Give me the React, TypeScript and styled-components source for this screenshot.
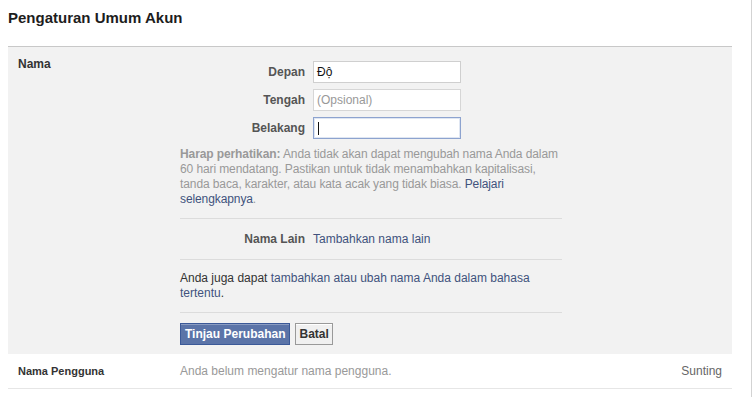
import React from "react";
import styled, { createGlobalStyle } from "styled-components";

const Global = createGlobalStyle`
  html, body { margin: 0; padding: 0; background: #fff; }
  body { font-family: "Liberation Sans", Arial, Helvetica, sans-serif; font-size: 12px; color: #333; }
  * { box-sizing: border-box; }
`;

const Shell = styled.div`
  width: 752px;
  min-height: 100vh;
  border-right: 1px solid #d3d3d3;
  padding-left: 8px;
`;

const Title = styled.h2`
  margin: 0;
  padding-top: 8px;
  height: 46px;
  font-size: 15px;
  line-height: 20px;
  font-weight: bold;
  color: #1d1d1d;
`;

const Panel = styled.section`
  width: 724px;
  background: #f2f2f2;
  border-top: 1px solid #c8c8c8;
  display: grid;
  grid-template-columns: 162px 382px;
  padding: 9px 0 9px 10px;
`;

const SectionLabel = styled.div`
  font-weight: bold;
  color: #333;
  line-height: 16px;
`;

const Content = styled.div`
  padding-top: 5px;
`;

const FieldRows = styled.div`
  display: flex;
  flex-direction: column;
  gap: 6px;
`;

const FieldRow = styled.div`
  display: grid;
  grid-template-columns: 125px 148px;
  column-gap: 8px;
  align-items: center;
`;

const FieldLabel = styled.div`
  text-align: right;
  font-weight: bold;
  color: #555;
`;

const FieldBox = styled.div<{ $focused?: boolean; $muted?: boolean }>`
  height: 22px;
  background: #fff;
  border: 1px solid ${(p) => (p.$focused ? "#8da3cf" : p.$muted ? "#d6d6d6" : "#cfcfcf")};
  box-shadow: ${(p) => (p.$focused ? "inset 0 0 0 1px #dfe6f2" : "none")};
  padding: 0 3px;
  display: flex;
  align-items: center;
  color: ${(p) => (p.$muted ? "#999" : "#111")};
`;

const Caret = styled.span`
  width: 1px;
  height: 13px;
  background: #111;
  margin-left: 1px;
`;

const Note = styled.p`
  margin: 8px 0 0;
  color: #999;
  line-height: 15px;
  letter-spacing: -0.1px;
  padding-bottom: 11px;
  border-bottom: 1px solid #dcdcdc;
  b { color: #999; }
`;

const Link = styled.a`
  color: #41527d;
  text-decoration: none;
`;

const OtherRow = styled.div`
  display: grid;
  grid-template-columns: 125px auto;
  column-gap: 8px;
  padding: 12px 0;
  line-height: 16px;
  border-bottom: 1px solid #dcdcdc;
`;

const Plain = styled.p`
  margin: 0;
  padding: 11px 0;
  line-height: 15px;
  color: #333;
  border-bottom: 1px solid #dcdcdc;
`;

const Actions = styled.div`
  display: flex;
  gap: 5px;
  margin-top: 10px;
`;

const Button = styled.button<{ $primary?: boolean }>`
  height: 22px;
  padding: ${(p) => (p.$primary ? "0 4px" : "0 3px")};
  font-family: inherit;
  font-size: 12px;
  font-weight: bold;
  border: 1px solid ${(p) => (p.$primary ? "#3b5998" : "#999")};
  background: ${(p) => (p.$primary ? "#5b74a8" : "#f0f0f0")};
  color: ${(p) => (p.$primary ? "#fff" : "#333")};
  box-shadow: ${(p) => (p.$primary ? "inset 0 1px 0 #8a9cc2" : "inset 0 1px 0 #fff")};
  cursor: pointer;
`;

const UserRow = styled.div`
  width: 724px;
  height: 35px;
  border-bottom: 1px solid #e6e6e6;
  display: grid;
  grid-template-columns: 162px 1fr auto;
  align-items: center;
  padding: 0 10px;
`;

const UserLabel = styled.div`
  font-size: 11px;
  font-weight: bold;
  color: #333;
`;

const UserValue = styled.div`
  color: #999;
`;

const Edit = styled.a`
  color: #666;
`;

export default function App() {
  return (
    <>
      <Global />
      <Shell>
        <Title>Pengaturan Umum Akun</Title>
        <Panel>
          <SectionLabel>Nama</SectionLabel>
          <Content>
            <FieldRows>
              <FieldRow>
                <FieldLabel>Depan</FieldLabel>
                <FieldBox>Độ</FieldBox>
              </FieldRow>
              <FieldRow>
                <FieldLabel>Tengah</FieldLabel>
                <FieldBox $muted>(Opsional)</FieldBox>
              </FieldRow>
              <FieldRow>
                <FieldLabel>Belakang</FieldLabel>
                <FieldBox $focused>
                  <Caret />
                </FieldBox>
              </FieldRow>
            </FieldRows>
            <Note>
              <b>Harap perhatikan:</b> Anda tidak akan dapat mengubah nama Anda dalam 60 hari
              mendatang. Pastikan untuk tidak menambahkan kapitalisasi, tanda baca, karakter,
              atau kata acak yang tidak biasa. <Link href="#">Pelajari selengkapnya</Link>.
            </Note>
            <OtherRow>
              <FieldLabel>Nama Lain</FieldLabel>
              <Link href="#">Tambahkan nama lain</Link>
            </OtherRow>
            <Plain>
              Anda juga dapat{" "}
              <Link href="#">tambahkan atau ubah nama Anda dalam bahasa tertentu</Link>.
            </Plain>
            <Actions>
              <Button $primary>Tinjau Perubahan</Button>
              <Button>Batal</Button>
            </Actions>
          </Content>
        </Panel>
        <UserRow>
          <UserLabel>Nama Pengguna</UserLabel>
          <UserValue>Anda belum mengatur nama pengguna.</UserValue>
          <Edit>Sunting</Edit>
        </UserRow>
      </Shell>
    </>
  );
}
